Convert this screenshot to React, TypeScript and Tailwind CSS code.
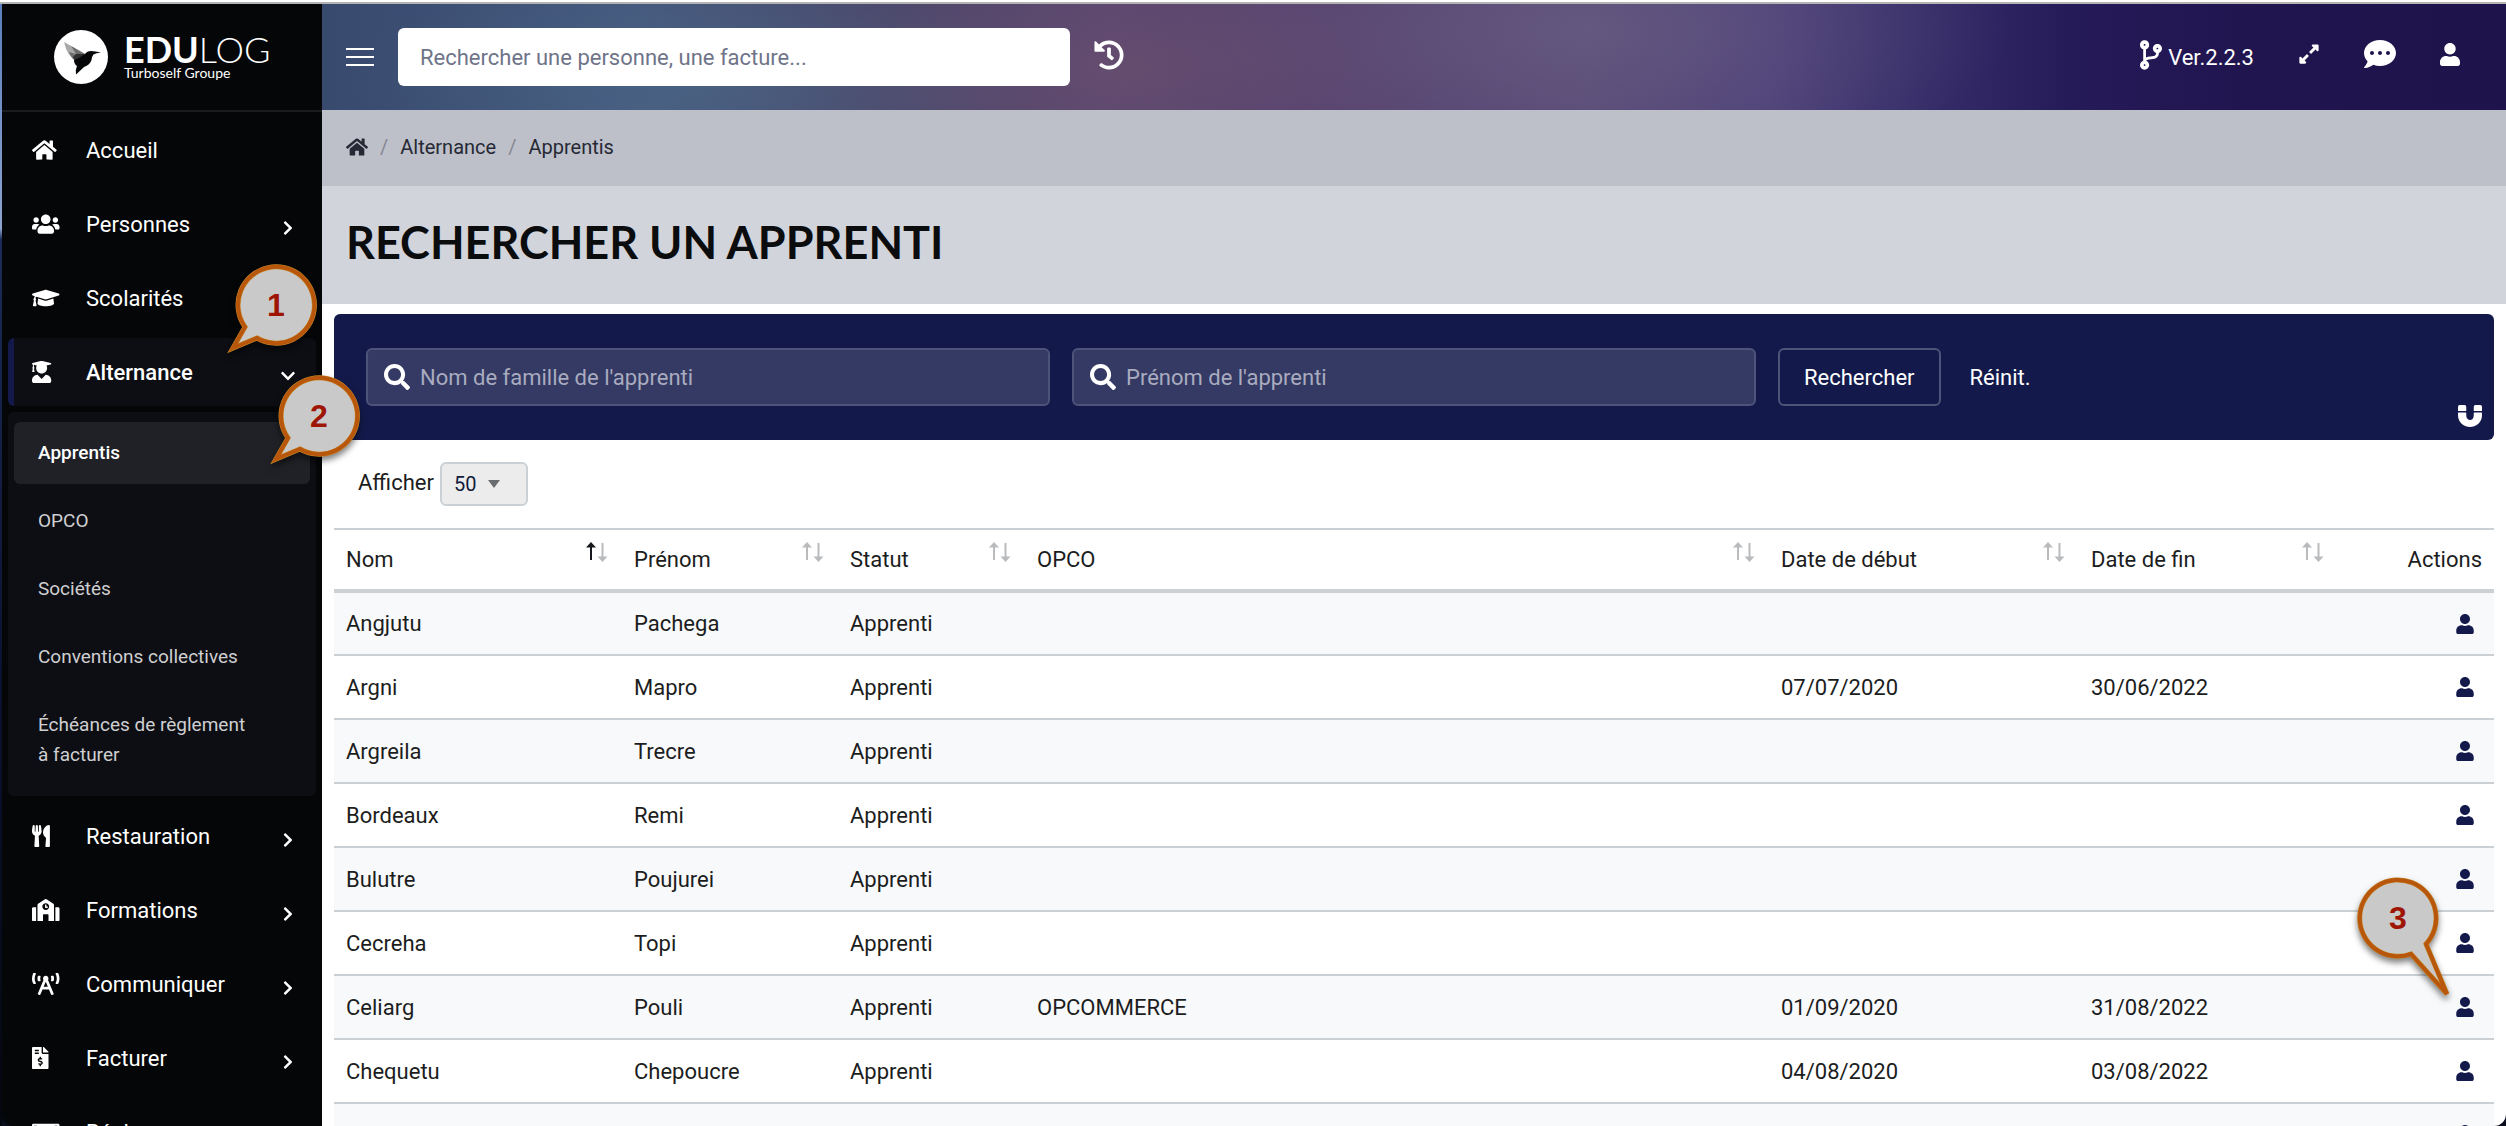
import type { ReactNode } from "react";
import type { IconType } from "react-icons";
import {
  FaBroadcastTower,
  FaChevronDown,
  FaChevronRight,
  FaCodeBranch,
  FaCommentDots,
  FaExpandAlt,
  FaFileInvoiceDollar,
  FaGraduationCap,
  FaHistory,
  FaHome,
  FaMagnet,
  FaMoneyBillAlt,
  FaSchool,
  FaSearch,
  FaUser,
  FaUserGraduate,
  FaUsers,
  FaUtensils,
} from "react-icons/fa";

type NavItem = {
  label: string;
  icon: IconType;
  expandable?: boolean;
  children?: string[];
};

const navItems: NavItem[] = [
  { label: "Accueil", icon: FaHome },
  { label: "Personnes", icon: FaUsers, expandable: true },
  { label: "Scolarités", icon: FaGraduationCap, expandable: true },
  {
    label: "Alternance",
    icon: FaUserGraduate,
    expandable: true,
    children: [
      "Apprentis",
      "OPCO",
      "Sociétés",
      "Conventions collectives",
      "Échéances de règlement à facturer",
    ],
  },
  { label: "Restauration", icon: FaUtensils, expandable: true },
  { label: "Formations", icon: FaSchool, expandable: true },
  { label: "Communiquer", icon: FaBroadcastTower, expandable: true },
  { label: "Facturer", icon: FaFileInvoiceDollar, expandable: true },
  { label: "Régler", icon: FaMoneyBillAlt, expandable: true },
];

const columns = [
  { label: "Nom", width: "w-[288px]", sorted: true },
  { label: "Prénom", width: "w-[216px]" },
  { label: "Statut", width: "w-[187px]" },
  { label: "OPCO", width: "" },
  { label: "Date de début", width: "w-[310px]" },
  { label: "Date de fin", width: "w-[259px]" },
];

const rows = [
  ["Angjutu", "Pachega", "Apprenti", "", "", ""],
  ["Argni", "Mapro", "Apprenti", "", "07/07/2020", "30/06/2022"],
  ["Argreila", "Trecre", "Apprenti", "", "", ""],
  ["Bordeaux", "Remi", "Apprenti", "", "", ""],
  ["Bulutre", "Poujurei", "Apprenti", "", "", ""],
  ["Cecreha", "Topi", "Apprenti", "", "", ""],
  ["Celiarg", "Pouli", "Apprenti", "OPCOMMERCE", "01/09/2020", "31/08/2022"],
  ["Chequetu", "Chepoucre", "Apprenti", "", "04/08/2020", "03/08/2022"],
  ["Cheriard", "Lucie", "Apprenti", "", "", ""],
];

function Logo() {
  return (
    <a href="#" className="flex h-[108px] items-center border-b-2 border-[#1b1c20] pl-[52px]">
      <svg viewBox="0 0 54 54" className="size-[54px]" aria-hidden>
        <circle cx="27" cy="27" r="27" fill="#fff" />
        <path d="M10 12 L19 17 L31 24 L23 32 Q13 26 10 12Z" fill="#a9a9a9" />
        <path d="M17 16 L31 24 L23 32 Q17 28 15 22 L22 24Z" fill="#6d6d6d" />
        <path d="M22 24 L31 24 L25 33 Q20 30 19 27Z" fill="#303030" />
        <path
          d="M31 24 Q33 21 37 21 Q41 21 47 22.500 Q42 23 39.500 24.500 Q38 26 37.500 30 Q36 35 30 37 Q27 40 22 44.500 Q21 40 23 36 Q20 34 20 30 Q26 28 31 24Z"
          fill="#050608"
        />
      </svg>
      <span className="ml-4 flex flex-col font-['Lato',sans-serif] text-white">
        <span className="text-[36px] leading-8">
          <span className="font-bold">EDU</span>
          <span className="font-light">LOG</span>
        </span>
        <span className="text-[14px] leading-4">Turboself Groupe</span>
      </span>
    </a>
  );
}

function Sidebar() {
  return (
    <aside className="w-80 shrink-0 bg-[#050608] text-[22px] text-white">
      <Logo />
      <nav className="flex flex-col gap-1.5 px-1.5 pt-1">
        {navItems.map(({ label, icon: Icon, expandable, children }) => (
          <div key={label} className="flex flex-col gap-1.5">
            <a
              href="#"
              className={
                children
                  ? "flex h-[68px] items-center rounded-md border-l-6 border-[#131a4b] bg-[#0d0e13] pr-[18px] pl-[18px] font-medium"
                  : "flex h-[68px] items-center rounded-md pr-[18px] pl-6"
              }
            >
              <span className="w-[54px]">
                <Icon className="h-[22px] w-7" preserveAspectRatio="xMinYMid" />
              </span>
              <span className="flex-1">{label}</span>
              {expandable && (
                <span className="flex w-5 justify-center pt-2">
                  {children ? (
                    <FaChevronDown className="size-4" />
                  ) : (
                    <FaChevronRight className="size-4" />
                  )}
                </span>
              )}
            </a>
            {children && (
              <ul className="flex flex-col gap-1.5 rounded-md bg-[#0d0e13] px-1.5 py-2.5 text-[19px] leading-[30px]">
                {children.map((child, i) => (
                  <li key={child}>
                    <a
                      href="#"
                      className={
                        i === 0
                          ? "block rounded-md bg-[#202126] py-4 pr-14 pl-6 font-medium"
                          : "block py-4 pr-14 pl-6 text-[#cfcfd1]"
                      }
                    >
                      {child}
                    </a>
                  </li>
                ))}
              </ul>
            )}
          </div>
        ))}
      </nav>
    </aside>
  );
}

function TopBar() {
  return (
    <header className="flex h-[106px] items-center bg-[radial-gradient(340px_150px_at_17%_75%,rgba(80,118,145,0.45),transparent),radial-gradient(320px_130px_at_37%_60%,rgba(112,84,110,0.5),transparent),radial-gradient(420px_150px_at_58%_25%,rgba(112,102,138,0.5),transparent),linear-gradient(90deg,#384a6e_0%,#42547a_14%,#4a4468_26%,#594570_36%,#54406e_46%,#574975_58%,#4d4078_66%,#372e6a_73%,#261b59_80%,#20154f_88%,#1e134a_100%)] pr-[46px] pl-6 text-[22px] text-white">
      <button type="button" aria-label="Menu" className="flex w-7 flex-col gap-1.5">
        <span className="h-0.5 bg-white" />
        <span className="h-0.5 bg-white" />
        <span className="h-0.5 bg-white" />
      </button>
      <input
        type="search"
        aria-label="Rechercher une personne, une facture"
        placeholder="Rechercher une personne, une facture..."
        className="ml-6 h-[58px] w-full max-w-2xl rounded-md bg-white px-[22px] text-gray-900 placeholder:text-[#6f7489]"
      />
      <button type="button" aria-label="Historique" className="mr-auto mb-1 ml-6">
        <FaHistory className="size-[30px]" />
      </button>
      <div className="flex items-center gap-11">
        <span className="flex items-center gap-1.5">
          <FaCodeBranch className="mb-1 h-[30px] w-[22px]" />
          Ver.2.2.3
        </span>
        <button type="button" aria-label="Plein écran" className="mb-1.5">
          <FaExpandAlt className="size-[22px]" />
        </button>
        <button type="button" aria-label="Messages" className="mb-1.5">
          <FaCommentDots className="size-8" />
        </button>
        <button type="button" aria-label="Compte" className="mb-1.5">
          <FaUser className="h-[23px] w-5" />
        </button>
      </div>
    </header>
  );
}

function SearchField({ id, label }: { id: string; label: string }) {
  return (
    <div className="w-1/3 px-[11px]">
      <label
        htmlFor={id}
        className="flex h-[58px] items-center rounded-md border-2 border-[#4d5379] bg-[#343a64] px-4"
      >
        <FaSearch className="mr-2.5 size-[26px] shrink-0" />
        <input
          id={id}
          type="text"
          aria-label={label}
          placeholder={label}
          className="w-full bg-transparent outline-none placeholder:text-[#a9abbf]"
        />
      </label>
    </div>
  );
}

function SearchPanel() {
  return (
    <form className="relative flex h-[126px] items-center rounded-md bg-[#131a4b] px-[21px] text-[22px] text-white">
      <SearchField id="nom" label="Nom de famille de l'apprenti" />
      <SearchField id="prenom" label="Prénom de l'apprenti" />
      <button
        type="button"
        className="mx-[11px] h-[58px] rounded-md border-2 border-[#4d5379] px-6"
      >
        Rechercher
      </button>
      <button type="reset" className="ml-[18px]">
        Réinit.
      </button>
      <FaMagnet className="absolute right-3 bottom-3 size-6" />
    </form>
  );
}

function SortArrows({ sorted }: { sorted?: boolean }) {
  return (
    <svg viewBox="0 0 22 20" className="h-5 w-[22px]" aria-hidden>
      <g fill={sorted ? "#15171c" : "#b9bbbd"}>
        <path d="M5 0 L10 5.500 H0Z" />
        <rect x="4" y="4" width="2" height="14" />
      </g>
      <g fill="#b9bbbd">
        <path d="M16.500 20 L21.500 14.500 H11.500Z" />
        <rect x="15.500" y="1" width="2" height="14" />
      </g>
    </svg>
  );
}

function ResultsTable() {
  return (
    <table className="w-full table-fixed border-collapse text-left text-[22px] text-[#1c1d21]">
      <thead>
        <tr className="h-[62px] border-t-2 border-b-4 border-[#cbd0d5]">
          {columns.map((col) => (
            <th key={col.label} className={`${col.width} pr-3.5 pl-3 font-normal`}>
              <span className="flex items-center justify-between">
                {col.label}
                <span className="pb-4">
                  <SortArrows sorted={col.sorted} />
                </span>
              </span>
            </th>
          ))}
          <th className="w-[156px] pr-3 text-right font-normal">Actions</th>
        </tr>
      </thead>
      <tbody>
        {rows.map((row) => (
          <tr key={row[0]} className="h-16 border-b-2 border-[#cbd0d5] odd:bg-[#f8f9fb]">
            {row.map((cell, i) => (
              <td key={i} className="pl-3">
                {cell}
              </td>
            ))}
            <td className="pr-5">
              <a href="#" aria-label={`Fiche de ${row[1]} ${row[0]}`} className="flex justify-end">
                <FaUser className="h-5 w-[18px] text-[#131a4b]" />
              </a>
            </td>
          </tr>
        ))}
      </tbody>
    </table>
  );
}

function Callout({ path, className, children }: { path: string; className: string; children: ReactNode }) {
  return (
    <div className={`pointer-events-none absolute size-32 ${className}`}>
      <svg
        viewBox="0 0 128 128"
        className="absolute inset-0 overflow-visible drop-shadow-[0_4px_3px_rgba(0,0,0,0.5)]"
        aria-hidden
      >
        <path d={path} fill="#c9c9c9" stroke="#c58a2a" strokeWidth="5" />
        <path d={path} fill="none" stroke="#b8560c" strokeWidth="4" />
      </svg>
      <span className="relative flex size-32 items-center justify-center font-['Liberation_Sans',sans-serif] text-[32px] font-bold text-[#9e1503]">
        {children}
      </span>
    </div>
  );
}

// Bubbles are centred on (64, 64); only the tail changes.
const tailLeft = "M33 86 A38.200 38.200 0 1 1 45 97 L21 107 Z";
const tailRight = "M77 100 A38.200 38.200 0 1 1 92 90 L113 140 Z";

export default function App() {
  return (
    <div className="relative flex h-screen flex-col overflow-hidden bg-[#0a0d1c] font-['Roboto',sans-serif]">
      <div className="h-1 shrink-0 border-t-2 border-white bg-[#b4b4b4]" />
      <div className="flex min-h-0 flex-1">
        <div className="w-0.5 shrink-0 bg-[linear-gradient(#5b7fbd_0%,#8ea3cf_20%,#1c2c58_21%,#0b1230_60%,#05070f_100%)]" />
        <div className="flex min-w-0 flex-1 overflow-hidden rounded-b-xl">
          <Sidebar />
          <main className="min-w-0 flex-1 bg-white">
            <TopBar />
            <nav
              aria-label="Fil d'Ariane"
              className="flex h-[76px] items-center gap-3 bg-[#bdc0c9] px-6 pb-0.5 text-[20px] text-[#262935]"
            >
              <a href="#" aria-label="Accueil">
                <FaHome className="h-5 w-[22px]" />
              </a>
              <span className="text-[#858893]">/</span>
              <a href="#">Alternance</a>
              <span className="text-[#858893]">/</span>
              <span>Apprentis</span>
            </nav>
            <div className="flex h-[118px] items-center bg-[#d2d4dc] px-6 pb-1.5">
              <h1 className="font-['Lato',sans-serif] text-[45px] leading-none font-bold text-[#0b0c0e]">
                RECHERCHER UN APPRENTI
              </h1>
            </div>
            <div className="px-3 pt-2.5">
              <SearchPanel />
              <div className="flex h-[88px] items-center gap-1.5 pl-6 text-[22px] text-[#1c1d21]">
                <label htmlFor="afficher" className="pb-1">
                  Afficher
                </label>
                <span className="relative">
                  <select
                    id="afficher"
                    defaultValue="50"
                    className="block h-11 w-[88px] appearance-none rounded-md border-2 border-[#cbd0d5] bg-[#ececec] pl-3 text-[20px] text-[#131a3b]"
                  >
                    <option>10</option>
                    <option>25</option>
                    <option>50</option>
                    <option>100</option>
                  </select>
                  <svg viewBox="0 0 12 8" className="pointer-events-none absolute top-[18px] left-12 h-2 w-3" aria-hidden>
                    <path d="M0 0 H12 L6 8Z" fill="#6a6d70" />
                  </svg>
                </span>
              </div>
              <ResultsTable />
            </div>
          </main>
        </div>
      </div>
      <Callout path={tailLeft} className="top-[241px] left-[212px]">
        1
      </Callout>
      <Callout path={tailLeft} className="top-[352px] left-[255px]">
        2
      </Callout>
      <Callout path={tailRight} className="top-[854px] right-[44px]">
        3
      </Callout>
    </div>
  );
}
